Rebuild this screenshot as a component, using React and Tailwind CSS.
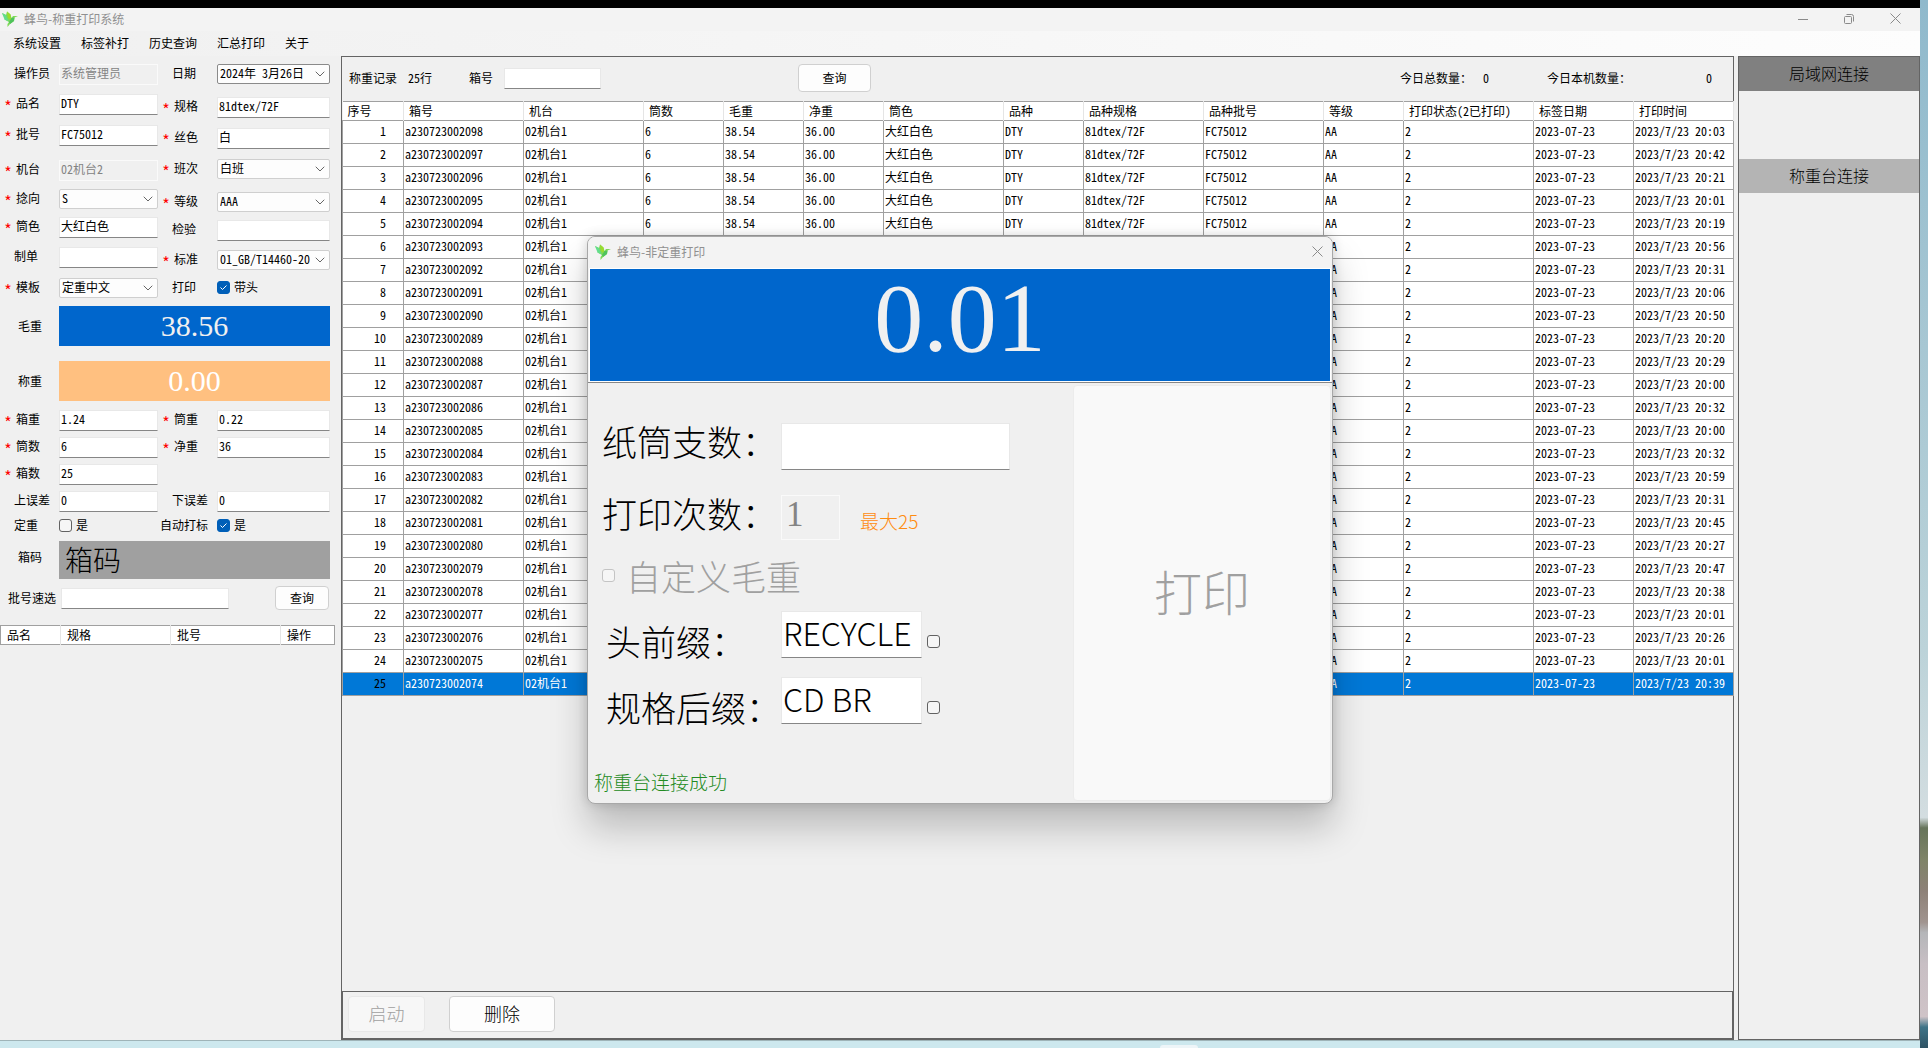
import React, { useState } from 'react';
import { ChevronDown } from 'lucide-react';

const columns = [
    { title: '序号', width: 61 },
    { title: '箱号', width: 120 },
    { title: '机台', width: 120 },
    { title: '筒数', width: 80 },
    { title: '毛重', width: 80 },
    { title: '净重', width: 80 },
    { title: '筒色', width: 120 },
    { title: '品种', width: 80 },
    { title: '品种规格', width: 120 },
    { title: '品种批号', width: 120 },
    { title: '等级', width: 80 },
    { title: '打印状态(2已打印)', width: 130 },
    { title: '标签日期', width: 100 },
    { title: '打印时间', width: 100 },
];

const printTimes = [
    '20:03', '20:42', '20:21', '20:01', '20:19', '20:56', '20:31', '20:06', '20:50',
    '20:20', '20:29', '20:00', '20:32', '20:00', '20:32', '20:59', '20:31', '20:45',
    '20:27', '20:47', '20:38', '20:01', '20:26', '20:01', '20:39',
];

const records = printTimes.map((time, i) => ({
    id: i + 1,
    cells: [
        `a2307230020${98 - i}`, '02机台1', '6', '38.54', '36.00', '大红白色', 'DTY',
        '81dtex/72F', 'FC75012', 'AA', '2', '2023-07-23', `2023/7/23 ${time}`,
    ],
}));

const menus = ['系统设置', '标签补打', '历史查询', '汇总打印', '关于'];

const Bird = () => (
    <svg viewBox="0 0 16 16" className="h-4 w-4 shrink-0">
        <path d="M0 2L4 4L5 0.5L8.500 3.500L9.500 7L11 5L16 5L12.500 6.500L12 10L8 13L5.500 16L5.500 13L7 11L2.500 8.500L3 7Z" fill="#7ed957" />
        <path d="M0 2L4 4L6.500 10.500L2.500 8.500Z" fill="#63dd8c" />
        <path d="M5 0.5L8.500 3.500L9 9L6 7Z" fill="#9bdc2c" />
        <path d="M9.500 7L12.500 6.500L12 10L8 13L7 11Z" fill="#4fc35c" />
    </svg>
);

const CloseIcon = () => (
    <svg width="11" height="11" viewBox="0 0 11 11">
        <path d="M0.500 0.500L10.500 10.500M10.500 0.500L0.500 10.500" stroke="#8a8a8a" />
    </svg>
);

const TextBox = ({ className = 'h-[21px] w-full pb-1 text-xs', ...props }) => (
    <input
        type="text"
        className={`min-w-0 border border-[#e8e8e8] border-b-[#868686] bg-white px-px outline-none disabled:border-[#fafafa] disabled:bg-[#f0f0f0] disabled:text-[#848484] ${className}`}
        {...props}
    />
);

const SelectBox = ({ value, border = 'border-[#cfcfcf]' }) => (
    <span className="relative block w-full">
        <select className={`h-5 w-full appearance-none rounded-xs border bg-[#fdfdfd] pr-4 pb-0.5 pl-0.5 text-xs outline-none ${border}`}>
            <option>{value}</option>
        </select>
        <ChevronDown size={16} strokeWidth={1.5} className="pointer-events-none absolute top-0.5 right-0.5 text-[#666666]" />
    </span>
);

const CheckBox = ({ muted, ...props }) => (
    <span className="relative block h-[13px] w-[13px] shrink-0">
        <input
            type="checkbox"
            className={`peer block h-[13px] w-[13px] appearance-none rounded-[3px] border bg-[#f6f6f6] checked:border-[#005fb8] checked:bg-[#005fb8] ${muted ? 'border-[#c4c4c4]' : 'border-[#626262]'}`}
            {...props}
        />
        <svg viewBox="0 0 13 13" className="pointer-events-none absolute inset-0 hidden peer-checked:block">
            <path d="M3.500 6.500L5.500 8.500L9.500 4.500" fill="none" stroke="#ffffff" />
        </svg>
    </span>
);

const Field = ({ label, required, children }) => (
    <label className="flex items-start">
        <span className="flex h-[18px] w-[59px] shrink-0 items-center">
            {required
                ? <span className="w-4 pt-1.5 pl-1 text-base leading-3 text-[#ff0000]">*</span>
                : <span className="w-3.5" />}
            <span className="whitespace-nowrap">{label}</span>
        </span>
        {children}
    </label>
);

const Sidebar = () => (
    <aside className="w-[341px] shrink-0 text-xs">
        <div className="flex pt-2">
            <div className="grid w-[158px] grid-rows-[30px_31px_35px_29px_28px_30px_31px_28px]">
                <Field label="操作员"><TextBox defaultValue="系统管理员" disabled /></Field>
                <Field label="品名" required><TextBox defaultValue="DTY" /></Field>
                <Field label="批号" required><TextBox defaultValue="FC75012" /></Field>
                <Field label="机台" required><TextBox defaultValue="02机台2" disabled /></Field>
                <Field label="捻向" required><SelectBox value="S" /></Field>
                <Field label="筒色" required><TextBox defaultValue="大红白色" /></Field>
                <Field label="制单"><TextBox /></Field>
                <Field label="模板" required><SelectBox value="定重中文" /></Field>
            </div>
            <div className="grid w-[172px] grid-rows-[33px_31px_31px_33px_28px_30px_28px_28px]">
                <Field label="日期"><SelectBox value="2024年 3月26日" border="border-[#8a8a8a]" /></Field>
                <Field label="规格" required><TextBox defaultValue="81dtex/72F" /></Field>
                <Field label="丝色" required><TextBox defaultValue="白" /></Field>
                <Field label="班次" required><SelectBox value="白班" /></Field>
                <Field label="等级" required><SelectBox value="AAA" /></Field>
                <Field label="检验"><TextBox /></Field>
                <Field label="标准" required><SelectBox value="01_GB/T14460-20" /></Field>
                <Field label="打印">
                    <span className="flex h-[18px] items-center gap-1"><CheckBox defaultChecked />带头</span>
                </Field>
            </div>
        </div>

        <div className="flex h-10 items-center">
            <span className="w-[59px] pl-[18px]">毛重</span>
            <output className="w-[271px] bg-[#0066cc] text-center font-['Liberation_Serif',serif] text-[30px] leading-10 text-[#f0f0f0]">38.56</output>
        </div>
        <div className="mt-[15px] flex h-10 items-center">
            <span className="w-[59px] pl-[18px]">称重</span>
            <output className="w-[271px] bg-[#ffc080] text-center font-['Liberation_Serif',serif] text-[30px] leading-10 text-white">0.00</output>
        </div>

        <div className="mt-[9px] grid grid-cols-[158px_172px] grid-rows-[27px_27px_27px_23px]">
            <Field label="箱重" required><TextBox defaultValue="1.24" /></Field>
            <Field label="筒重" required><TextBox defaultValue="0.22" /></Field>
            <Field label="筒数" required><TextBox defaultValue="6" /></Field>
            <Field label="净重" required><TextBox defaultValue="36" /></Field>
            <Field label="箱数" required><TextBox defaultValue="25" /></Field>
            <span />
            <Field label="上误差"><TextBox defaultValue="0" /></Field>
            <Field label="下误差"><TextBox defaultValue="0" /></Field>
        </div>
        <div className="flex h-[22px] items-center">
            <label className="flex w-[158px] items-center">
                <span className="w-[59px] pl-3.5">定重</span>
                <span className="flex items-center gap-1"><CheckBox />是</span>
            </label>
            <label className="flex items-center">
                <span className="w-[59px] pl-0.5">自动打标</span>
                <span className="flex items-center gap-1"><CheckBox defaultChecked />是</span>
            </label>
        </div>

        <div className="mt-[5px] flex items-start">
            <span className="w-[59px] pl-[18px] leading-8">箱码</span>
            <div className="h-[38px] w-[271px] bg-[#a0a0a0] pl-1.5 font-['Noto_Sans_CJK_SC',sans-serif] text-[28px] leading-9 font-light">箱码</div>
        </div>
        <div className="mt-[7px] flex h-6 items-center">
            <label className="flex items-center">
                <span className="w-[61px] pl-2">批号速选</span>
                <TextBox className="h-[21px] w-[168px] pb-1 text-xs" />
            </label>
            <button className="ml-[46px] h-6 w-[54px] rounded border border-[#d0d0d0] bg-[#fdfdfd]">查询</button>
        </div>

        <table className="mt-[15px] w-[335px] table-fixed border border-[#a0a0a0] bg-white text-left">
            <thead>
                <tr className="h-[18px]">
                    <th className="w-[60px] border-r border-[#e5e5e5] pl-1.5 leading-[18px] font-normal">品名</th>
                    <th className="w-[110px] border-r border-[#e5e5e5] pl-1.5 leading-[18px] font-normal">规格</th>
                    <th className="w-[110px] border-r border-[#e5e5e5] pl-1.5 leading-[18px] font-normal">批号</th>
                    <th className="pl-1.5 leading-[18px] font-normal">操作</th>
                </tr>
            </thead>
        </table>
    </aside>
);

const RecordTable = ({ selected, onSelect }) => (
    <table className="w-full table-fixed border-collapse text-left text-xs">
        <colgroup>
            {columns.map(col => <col key={col.title} style={{ width: col.width }} />)}
        </colgroup>
        <thead>
            <tr className="h-[19px] border-t border-b border-[#a0a0a0] bg-white">
                {columns.map(col => (
                    <th key={col.title} className="border-r border-[#e5e5e5] border-b-[#a0a0a0] p-0 pl-[5px] leading-4 font-normal whitespace-nowrap">
                        {col.title}
                    </th>
                ))}
            </tr>
        </thead>
        <tbody>
            {records.map(row => (
                <tr
                    key={row.id}
                    onClick={() => onSelect(row.id)}
                    className={`h-[23px] ${selected === row.id ? 'bg-[#0078d7]' : 'bg-white'}`}
                >
                    <td className="border border-[#a0a0a0] p-0 pr-[17px] pb-0.5 text-right leading-5">{row.id}</td>
                    {row.cells.map((cell, i) => (
                        <td
                            key={columns[i + 1].title}
                            className={`border border-[#a0a0a0] p-0 pb-0.5 pl-px leading-5 whitespace-nowrap ${selected === row.id ? 'text-white' : ''}`}
                        >
                            {cell}
                        </td>
                    ))}
                </tr>
            ))}
        </tbody>
    </table>
);

const PrintDialog = ({ onClose }) => (
    <div
        role="dialog"
        aria-label="蜂鸟-非定重打印"
        className="absolute top-[228px] left-1/2 w-[746px] -translate-x-1/2 overflow-hidden rounded-lg border border-[#a8a8a8] bg-[#f0f0f0] shadow-[0_24px_36px_rgba(0,0,0,0.22),0_0_12px_rgba(0,0,0,0.16)]"
    >
        <div className="flex h-[31px] items-center bg-[#f3f3f3] pb-0.5 pl-[7px] font-['Noto_Sans_CJK_SC',sans-serif] text-xs text-[#909090]">
            <Bird />
            <span className="ml-1.5 flex-1">蜂鸟-非定重打印</span>
            <button aria-label="关闭" onClick={onClose} className="flex h-full w-[30px] items-center justify-center">
                <CloseIcon />
            </button>
        </div>
        <div className="border-b border-[#868686] px-px">
            <output className="block h-[114px] border border-white bg-[#0066cc] text-center font-['Liberation_Serif',serif] text-[98px] leading-[98px] text-[#f0f0f0]">
                0.01
            </output>
        </div>
        <div className="flex h-[420px] pr-px font-['Noto_Sans_CJK_SC',sans-serif] font-light">
            <div className="w-[485px] pt-10 text-[35px] leading-9">
                <label className="flex h-[72px] items-start pl-3.5">
                    <span className="w-[179px] whitespace-nowrap">纸筒支数：</span>
                    <TextBox className="h-[47px] w-[229px]" />
                </label>
                <div className="flex h-[58px] items-start">
                    <label className="flex items-start pl-3.5">
                        <span className="w-[179px] whitespace-nowrap">打印次数：</span>
                        <TextBox className="h-[45px] w-[59px] pb-1.5 pl-1 font-['Liberation_Serif',serif]" defaultValue="1" disabled />
                    </label>
                    <span className="mt-2 ml-5 text-[19px] text-[#ff8c10]">最大25</span>
                </div>
                <label className="flex h-[58px] items-start pl-3.5 leading-[45px] text-[#a0a0a0]">
                    <span className="flex h-[45px] w-6 items-center"><CheckBox muted disabled /></span>
                    自定义毛重
                </label>
                <div className="flex h-[60px] items-center pl-[18px]">
                    <label htmlFor="prefix" className="w-[175px] whitespace-nowrap">头前缀：</label>
                    <TextBox
                        id="prefix"
                        className="h-[47px] w-[141px] self-start pb-1.5 text-[32px]"
                        defaultValue="RECYCLE"
                    />
                    <span className="pl-[5px]"><CheckBox aria-label="使用头前缀" /></span>
                </div>
                <div className="mt-1.5 flex h-[60px] items-center pl-[18px]">
                    <label htmlFor="suffix" className="w-[175px] whitespace-nowrap">规格后缀：</label>
                    <TextBox
                        id="suffix"
                        className="h-[47px] w-[141px] self-start pb-1.5 text-[32px]"
                        defaultValue="CD BR"
                    />
                    <span className="pl-[5px]"><CheckBox aria-label="使用规格后缀" /></span>
                </div>
                <p className="mt-[27px] pl-1.5 text-[19px] text-[#228b22]">称重台连接成功</p>
            </div>
            <button disabled className="my-0.5 flex-1 rounded border border-[#ececec] bg-[#f9f9f9] pb-1.5 text-5xl text-[#a0a0a0]">
                打印
            </button>
        </div>
    </div>
);

const App = () => {
    const [selected, setSelected] = useState(25);
    const [dialogOpen, setDialogOpen] = useState(true);

    return (
        <div className="flex min-h-screen bg-[#cde8ee] font-['Noto_Sans_Mono_CJK_SC','Noto_Sans_CJK_SC',monospace] text-black">
            <div className="flex min-w-0 flex-1 flex-col">
                <div className="h-2 bg-black" />
                <div className="relative flex flex-1 flex-col bg-[#f0f0f0]">
                    <header className="flex h-[23px] items-center bg-[#f3f3f3] pr-0.5 pb-0.5 pl-0.5 font-['Noto_Sans_CJK_SC',sans-serif] text-xs text-[#909090]">
                        <Bird />
                        <span className="ml-1.5 flex-1">蜂鸟-称重打印系统</span>
                        <button aria-label="最小化" className="flex w-[46px] justify-center">
                            <svg width="10" height="10"><path d="M0 5.500H10" stroke="#8a8a8a" /></svg>
                        </button>
                        <button aria-label="还原" className="flex w-[46px] justify-center">
                            <svg width="10" height="10" fill="none" stroke="#8a8a8a">
                                <rect x="0.500" y="2.500" width="7" height="7" rx="1" />
                                <path d="M2.500 0.500H7.500Q9.500 0.500 9.500 2.500V7.500" />
                            </svg>
                        </button>
                        <button aria-label="关闭" className="flex w-[46px] justify-center">
                            <CloseIcon />
                        </button>
                    </header>
                    <nav className="flex h-[25px] items-center gap-5 bg-linear-to-r from-[#f0f0f0] to-[#fdfdfd] pb-0.5 pl-[13px] font-['Noto_Sans_CJK_SC',sans-serif] text-xs">
                        {menus.map(menu => <button key={menu}>{menu}</button>)}
                    </nav>

                    <div className="flex flex-1">
                        <Sidebar />
                        <main className="flex min-w-0 flex-1 flex-col border border-[#646464]">
                            <div className="flex h-11 items-center pb-0.5 pl-[7px] text-xs whitespace-nowrap">
                                <span className="w-[59px]">称重记录</span>
                                <span className="w-[61px]">25行</span>
                                <label className="flex items-center">
                                    <span className="w-[35px]">箱号</span>
                                    <TextBox className="h-[21px] w-[97px] pb-1 text-xs" />
                                </label>
                                <button className="ml-[197px] h-7 w-[73px] rounded border border-[#d0d0d0] bg-[#fdfdfd]">查询</button>
                                <span className="ml-auto w-[83px]">今日总数量：</span>
                                <span className="w-16">0</span>
                                <span className="w-[159px]">今日本机数量：</span>
                                <span className="w-[27px]">0</span>
                            </div>
                            <RecordTable selected={selected} onSelect={setSelected} />
                            <footer className="mt-auto flex h-12 items-center gap-6 border border-[#646464] pb-0.5 pl-[5px] font-['Noto_Sans_CJK_SC',sans-serif] text-lg font-light">
                                <button disabled className="h-9 w-[77px] rounded border border-[#e8e8e8] bg-[#f7f7f7] pb-0.5 text-[#a0a0a0]">启动</button>
                                <button className="h-9 w-[106px] rounded border border-[#d0d0d0] bg-[#fdfdfd] pb-0.5">删除</button>
                            </footer>
                        </main>
                        <section className="ml-1 flex w-[182px] shrink-0 flex-col gap-[68px] border border-[#646464] font-['Noto_Sans_CJK_SC',sans-serif] font-light">
                            <button className="h-[34px] bg-[#808080] pb-0.5 text-base">局域网连接</button>
                            <button className="h-[34px] bg-[#b4b4b4] pb-0.5 text-base">称重台连接</button>
                        </section>
                    </div>
                    {dialogOpen && <PrintDialog onClose={() => setDialogOpen(false)} />}
                </div>
                <div className="flex h-2 items-end border-t border-[#9fb4b8]">
                    <div className="ml-[60.4%] h-[3px] w-[38px] rounded-t bg-[#eef5f8]" />
                </div>
            </div>
            <div className="w-2 bg-[linear-gradient(to_bottom,#8fb9cc_0%,#bcd3d9_62%,#d3dde0_78%,#66745a_79%,#7f8468_82%,#8d8178_85%,#a0948f_88%,#b4b6b9_89%,#c8bfc4_92%,#cfc3c7_97%,#3f7488_98%,#2f5364_100%)]" />
        </div>
    );
};

export default App;
